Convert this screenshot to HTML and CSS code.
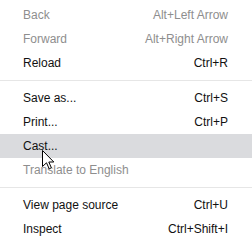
FILE: index.html
```html
<!DOCTYPE html>
<html>
<head>
<meta charset="utf-8">
<link rel="stylesheet" href="styles.css">
</head>
<body>
<div class="menu">
  <div class="item disabled"><span class="label">Back</span><span class="key">Alt+Left Arrow</span></div>
  <div class="item disabled"><span class="label">Forward</span><span class="key">Alt+Right Arrow</span></div>
  <div class="item"><span class="label">Reload</span><span class="key">Ctrl+R</span></div>
  <div class="sep"></div>
  <div class="item"><span class="label">Save as...</span><span class="key">Ctrl+S</span></div>
  <div class="item"><span class="label">Print...</span><span class="key">Ctrl+P</span></div>
  <div class="item hover"><span class="label">Cast...</span><span class="key"></span></div>
  <div class="item disabled"><span class="label">Translate to English</span><span class="key"></span></div>
  <div class="sep"></div>
  <div class="item"><span class="label">View page source</span><span class="key">Ctrl+U</span></div>
  <div class="item"><span class="label">Inspect</span><span class="key">Ctrl+Shift+I</span></div>
  <svg class="cursor" width="13" height="20" viewBox="0 0 13 20">
    <path d="M0.5 0.5 L0.5 16.5 L4.5 12.8 L7.2 18.8 L9.4 17.8 L6.8 12 L11.8 12 Z" fill="#fff" stroke="#000" stroke-width="1" stroke-linejoin="miter"/>
  </svg>
</div>
</body>
</html>
```
FILE: styles.css
```css
html, body {
  margin: 0;
  padding: 0;
  background: #ffffff;
}
.menu {
  position: relative;
  width: 252px;
  height: 241px;
  padding-top: 3px;
  box-sizing: border-box;
  font-family: "Liberation Sans", Arial, sans-serif;
  font-size: 12px;
  color: #111111;
  overflow: hidden;
}
.item {
  display: flex;
  justify-content: space-between;
  align-items: center;
  height: 24px;
  line-height: 24px;
  padding: 0 24px 0 23px;
  white-space: nowrap;
}
.item.disabled {
  color: #8e8e8e;
}
.item.hover {
  background: #dadbde;
}
.sep {
  height: 11px;
  display: flex;
  flex-direction: column;
  justify-content: center;
}
.sep::before {
  content: "";
  display: block;
  height: 1px;
  background: #e6e6e6;
}
.cursor {
  position: absolute;
  left: 42px;
  top: 150px;
}
```
